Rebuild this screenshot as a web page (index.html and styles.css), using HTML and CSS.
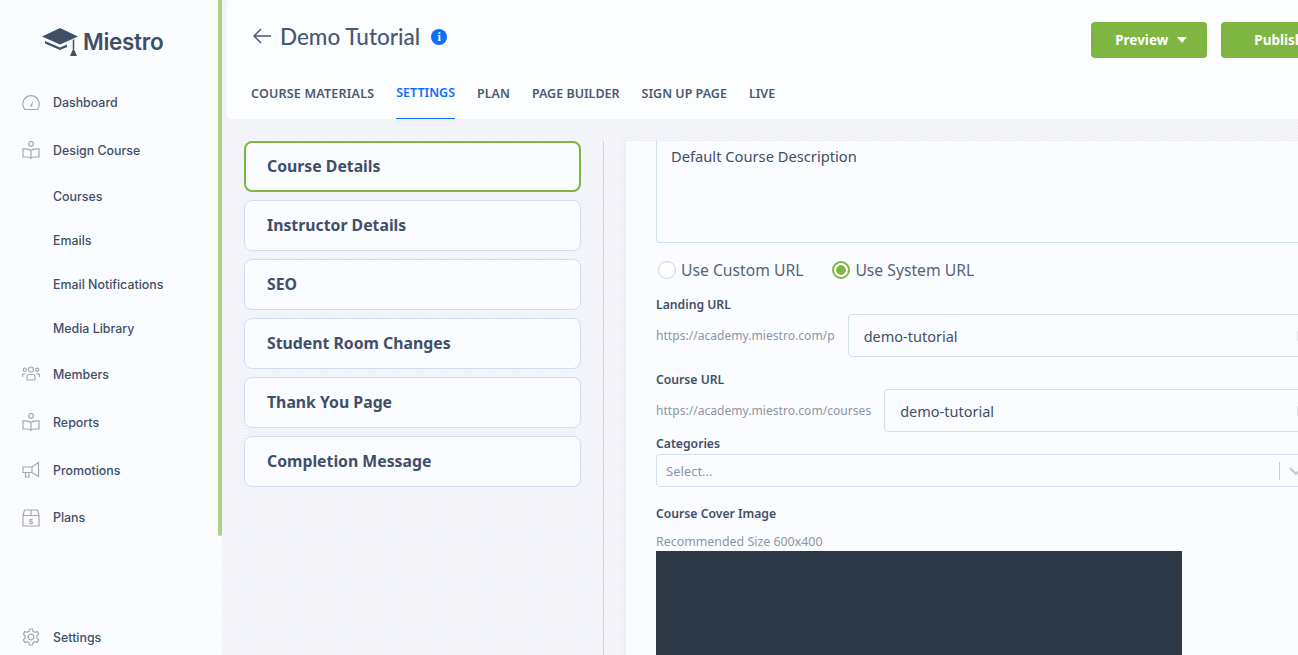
FILE: index.html
```html
<!DOCTYPE html>
<html lang="en">
  <head>
    <meta charset="UTF-8" />
    <title>Miestro - Demo Tutorial</title>
    <link rel="stylesheet" href="styles.css">
  </head>
  <body>
    <aside class="sidebar">
      <div class="logo">
        <svg class="logo-icon" viewBox="0 0 36 28" width="36" height="28">
          <path d="M18 0 36 8.5 18 16.5 0 8.5Z" fill="#3f5069"/>
          <path d="M3 13 18 19.5 25 16.5 25 19 18 22 3 15.5Z" fill="#3f5069"/>
          <path d="M31.5 11.5V21" stroke="#3f5069" stroke-width="1.5"/>
          <path d="M31.5 20 35 28H28Z" fill="#3f5069"/>
        </svg>
        <span>Miestro</span>
      </div>
      <nav class="nav">
        <a class="nav-item">
          <svg class="nav-icon" viewBox="0 0 18 18"><path d="M2.8 16.5a8.3 8.3 0 1 1 12.4 0Z"/><path d="M7.8 13.5h2.4L11 8Z" fill="#a5a8ad" stroke="none"/></svg>
          Dashboard
        </a>
        <a class="nav-item">
          <svg class="nav-icon" viewBox="0 0 18 18"><circle cx="9" cy="2.8" r="2.4"/><path d="M9 9.5Q7 7.8 3 7.8H1V16H5.5Q8 16 9 17.3Q10 16 12.5 16H17V7.8H15Q11 7.8 9 9.5ZM9 9.5V17"/></svg>
          Design Course
        </a>
        <a class="nav-sub">Courses</a>
        <a class="nav-sub">Emails</a>
        <a class="nav-sub">Email Notifications</a>
        <a class="nav-sub">Media Library</a>
        <a class="nav-item">
          <svg class="nav-icon" viewBox="0 0 18 18"><circle cx="9" cy="4.5" r="2.5"/><circle cx="2.8" cy="4.8" r="1.6"/><circle cx="15.2" cy="4.8" r="1.6"/><path d="M5 15V11.5Q5 9.5 7 9.5H11Q13 9.5 13 11.5V15ZM.5 12V10.5Q.5 8.8 2 8.8H3.5M17.5 12V10.5Q17.5 8.8 16 8.8H14.5"/></svg>
          Members
        </a>
        <a class="nav-item">
          <svg class="nav-icon" viewBox="0 0 18 18"><circle cx="9" cy="2.8" r="2.4"/><path d="M9 9.5Q7 7.8 3 7.8H1V16H5.5Q8 16 9 17.3Q10 16 12.5 16H17V7.8H15Q11 7.8 9 9.5ZM9 9.5V17"/></svg>
          Reports
        </a>
        <a class="nav-item">
          <svg class="nav-icon" viewBox="0 0 18 18"><path d="M1 6H10L16.5 1.5V15.5L10 11.5H1ZM10 6V11.5M3.5 11.5V16H7V11.5"/></svg>
          Promotions
        </a>
        <a class="nav-item nav-short">
          <svg class="nav-icon" viewBox="0 0 18 18"><path d="M1 6.5 2.5 1H15.5L17 6.5V17H1ZM1 6.5H17M9 1V6.5"/><text x="9" y="14.5" class="plan-sign">$</text></svg>
          Plans
        </a>
        <a class="nav-item nav-bottom">
          <svg class="nav-icon" viewBox="0 0 18 18"><circle cx="9" cy="9" r="2.8"/><path d="M7.5 1H10.5L11 3.3 13 4.4 15.2 3.6 16.7 6.2 15 7.8V10.2L16.7 11.8 15.2 14.4 13 13.6 11 14.7 10.5 17H7.5L7 14.7 5 13.6 2.8 14.4 1.3 11.8 3 10.2V7.8L1.3 6.2 2.8 3.6 5 4.4 7 3.3Z"/></svg>
          Settings
        </a>
      </nav>
      <div class="scroll-thumb"></div>
    </aside>

    <main class="main">
      <header class="header">
        <div class="header-top">
          <svg class="back" viewBox="0 0 18 16" width="18" height="16"><path d="M8 1 1 8 8 15M1 8H18" fill="none" stroke="#4a5a72" stroke-width="1.5"/></svg>
          <h1>Demo Tutorial</h1>
          <span class="info">i</span>
          <div class="actions">
            <button class="btn btn-preview">Preview <span class="caret"></span></button>
            <button class="btn">Publish</button>
          </div>
        </div>
        <div class="tabs">
          <a class="tab">COURSE MATERIALS</a>
          <a class="tab active">SETTINGS</a>
          <a class="tab">PLAN</a>
          <a class="tab">PAGE BUILDER</a>
          <a class="tab">SIGN UP PAGE</a>
          <a class="tab">LIVE</a>
        </div>
      </header>

      <div class="content">
        <div class="menu">
          <div class="card selected">Course Details</div>
          <div class="card">Instructor Details</div>
          <div class="card">SEO</div>
          <div class="card">Student Room Changes</div>
          <div class="card">Thank You Page</div>
          <div class="card">Completion Message</div>
        </div>

        <div class="panel">
          <div class="textarea">Default Course Description</div>
          <div class="radios">
            <span class="radio"><i class="dot"></i>Use Custom URL</span>
            <span class="radio"><i class="dot on"></i>Use System URL</span>
          </div>
          <label class="label">Landing URL</label>
          <div class="url-row">
            <span class="prefix">https://academy.miestro.com/p</span>
            <div class="input">demo-tutorial<span class="input-mark"></span></div>
          </div>
          <label class="label course-label">Course URL</label>
          <div class="url-row">
            <span class="prefix">https://academy.miestro.com/courses</span>
            <div class="input">demo-tutorial<span class="input-mark"></span></div>
          </div>
          <label class="label cat-label">Categories</label>
          <div class="select">
            <span class="placeholder">Select...</span>
            <span class="sep"></span>
            <svg class="chev" viewBox="0 0 20 20" width="20" height="20"><path d="M4 7 10 13 16 7" fill="none" stroke="#c4c7cc" stroke-width="2"/></svg>
          </div>
          <label class="label cover-label">Course Cover Image</label>
          <p class="hint">Recommended Size 600x400</p>
          <div class="cover"></div>
        </div>
      </div>
    </main>
  </body>
</html>
```

FILE: styles.css
```css
body {
  margin: 0;
  display: flex;
  height: 655px;
  overflow: hidden;
  font-family: "Noto Sans", sans-serif;
  color: #3f4f68;
  background-color: #f2f3f9;
  background-image: radial-gradient(#fbfbfe 0.7px, transparent 0.8px);
  background-size: 3px 3px;
}

/* sidebar */
.sidebar {
  position: relative;
  flex: 0 0 222px;
  display: flex;
  flex-direction: column;
  background-color: #fbfcff;
  font-family: Inter, sans-serif;
}
.scroll-thumb {
  position: absolute;
  top: 0;
  right: 0;
  width: 4px;
  height: 536px;
  border-radius: 0 0 2px 2px;
  background-color: #add088;
}
.logo {
  height: 78px;
  padding: 5px 0 0 42px;
  box-sizing: border-box;
  display: flex;
  align-items: center;
  gap: 5px;
  font-size: 22.5px;
  font-weight: 600;
  letter-spacing: -0.3px;
}
.nav {
  flex: 1;
  display: flex;
  flex-direction: column;
}
.nav-item,
.nav-sub {
  display: flex;
  align-items: center;
  font-size: 12.4px;
  font-weight: 500;
  color: #3f4f68;
}
.nav-item {
  height: 48px;
  padding-left: 22px;
  gap: 13px;
}
.nav-short {
  height: 47px;
}
.nav-sub {
  height: 44px;
  padding-left: 53px;
}
.nav-bottom {
  margin-top: auto;
  height: 36px;
}
.nav-icon {
  width: 18px;
  height: 18px;
  fill: none;
  stroke: #a5a8ad;
  stroke-width: 1.2;
}
.plan-sign {
  font-size: 8px;
  font-family: "Liberation Sans", sans-serif;
  text-anchor: middle;
  fill: #8f9298;
  stroke: none;
}

/* header */
.main {
  flex: 0 0 1113px;
  padding-left: 5px;
  box-sizing: border-box;
}
.header {
  height: 119px;
  padding-left: 24px;
  box-sizing: border-box;
  background-color: #fcfdff;
  border-radius: 4px 0 0 4px;
}
.header-top {
  height: 75px;
  display: flex;
  align-items: center;
  padding-left: 2px;
}
.header-top h1 {
  margin: -3px 0 0 9px;
  font-family: Lato, sans-serif;
  font-size: 22.5px;
  font-weight: 500;
  color: #475870;
}
.back {
  margin-top: -3px;
}
.info {
  width: 16px;
  height: 16px;
  margin: -1px 0 0 11px;
  border-radius: 50%;
  background-color: #0d6efd;
  color: #fff;
  font: bold 12px/16px "Liberation Serif", serif;
  text-align: center;
}
.actions {
  margin: 5px 0 0 auto;
  display: flex;
  gap: 14px;
}
.btn {
  flex: none;
  width: 116px;
  height: 36px;
  padding: 0;
  border: none;
  border-radius: 4px;
  background-color: #7eb641;
  color: #fff;
  font-family: "Noto Sans", sans-serif;
  font-size: 13.5px;
  font-weight: 700;
}
.btn-preview {
  padding-left: 4px;
}
.caret {
  display: inline-block;
  margin-left: 5px;
  vertical-align: 2px;
  border-left: 5px solid transparent;
  border-right: 5px solid transparent;
  border-top: 6px solid #fff;
}
.tabs {
  display: flex;
  gap: 22px;
  height: 44px;
}
.tab {
  display: flex;
  align-items: center;
  height: 44px;
  padding-bottom: 8px;
  box-sizing: border-box;
  font-size: 12.5px;
  font-weight: 600;
  color: #4a5a72;
}
.tab:first-child {
  letter-spacing: 0.2px;
}
.tab.active {
  color: #0d6efd;
  border-bottom: 1px solid #0d6efd;
}

/* content */
.content {
  display: flex;
  margin-top: 22px;
}
.menu {
  flex: 0 0 337px;
  margin-left: 17px;
  padding-right: 22px;
  height: 514px;
  border-right: 1px solid #c9d2da;
  display: flex;
  flex-direction: column;
  gap: 8px;
}
.card {
  height: 51px;
  box-sizing: border-box;
  padding: 0 0 2px 22px;
  display: flex;
  align-items: center;
  background-color: #fbfcff;
  border: 1px solid #cfdff1;
  border-radius: 8px;
  font-size: 15.8px;
  font-weight: 700;
}
.card.selected {
  border: 2px solid #7eb641;
  padding-left: 21px;
}
.panel {
  flex: 1;
  height: 514px;
  margin-left: 22px;
  padding: 0 30px;
  background-color: #fbfcff;
  box-shadow: -3px 0 6px rgba(0, 0, 0, 0.03);
}
.textarea {
  height: 102px;
  box-sizing: border-box;
  padding: 5px 14px;
  border: 1px solid #cfdff1;
  border-top: none;
  border-radius: 0 0 4px 4px;
  font-size: 14.7px;
}
.radios {
  display: flex;
  gap: 27px;
  margin-top: 17px;
  height: 20px;
  align-items: center;
  font-size: 15.7px;
  color: #566478;
}
.radio {
  display: flex;
  align-items: center;
  gap: 5px;
}
.dot {
  width: 18px;
  height: 18px;
  margin-left: 2px;
  box-sizing: border-box;
  border: 1.5px solid #c9d2da;
  border-radius: 50%;
  background-color: #fff;
}
.dot.on {
  border-color: #7eb641;
  border-width: 2px;
  background: radial-gradient(#7eb641 0 4.5px, #fff 5px);
}
.label {
  display: block;
  margin-top: 16px;
  height: 18px;
  line-height: 18px;
  font-size: 12.2px;
  font-weight: 600;
  color: #3f4f68;
}
.course-label {
  margin-top: 14px;
}
.cat-label {
  margin-top: 3px;
}
.cover-label {
  margin-top: 18px;
}
.url-row {
  display: flex;
  align-items: center;
  gap: 13px;
}
.prefix {
  font-size: 12.1px;
  color: #8b96a3;
}
.input {
  flex: 1;
  height: 43px;
  box-sizing: border-box;
  padding: 0 6px 0 15px;
  display: flex;
  align-items: center;
  justify-content: space-between;
  border: 1px solid #cfdff1;
  border-radius: 4px;
  font-size: 14.5px;
}
.input-mark {
  width: 3px;
  height: 10px;
  background-color: #dfe1e4;
}
.select {
  height: 33px;
  box-sizing: border-box;
  display: flex;
  align-items: center;
  margin-top: 1px;
  padding-left: 9px;
  border: 1px solid #cfdff1;
  border-radius: 4px;
  font-size: 13px;
}
.placeholder {
  width: 613px;
  color: #8b96a3;
}
.sep {
  width: 1px;
  height: 18px;
  background-color: #ccc;
}
.chev {
  margin-left: 6px;
}
.hint {
  margin: 10px 0 0;
  height: 18px;
  line-height: 18px;
  font-size: 12.4px;
  color: #8b96a3;
}
.cover {
  width: 526px;
  height: 104px;
  background-color: #2e3947;
}
```
